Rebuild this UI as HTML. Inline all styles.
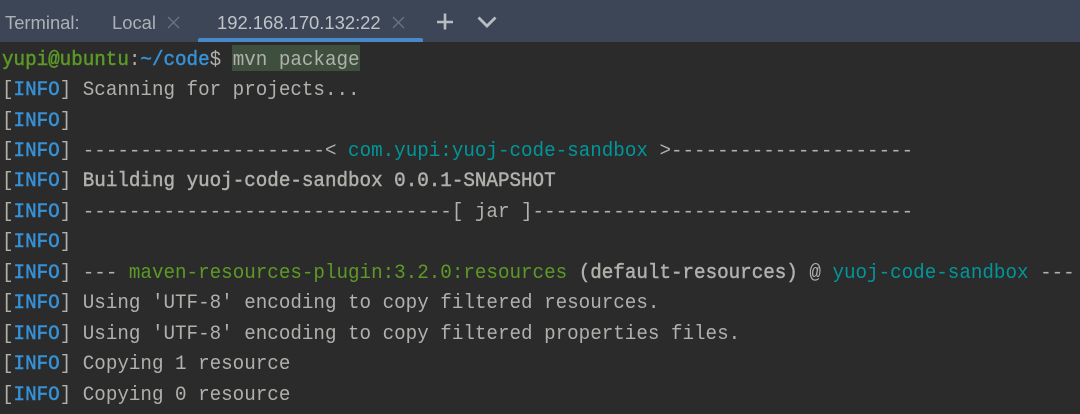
<!DOCTYPE html>
<html>
<head>
<meta charset="utf-8">
<style>
html,body{margin:0;padding:0;background:#2b2b2b}
#r{position:relative;width:1080px;height:414px;overflow:hidden;background:#2b2b2b}
#bar{position:absolute;left:0;top:0;width:1080px;height:42px;background:#3c4656}
.t{position:absolute;font-family:"Liberation Sans",sans-serif;font-size:18.4px;line-height:22px;white-space:pre;color:#b4b8bc}
#ul{position:absolute;left:198px;top:38px;width:225px;height:4px;background:#4a88c7;border-radius:2px 2px 0 0}
.l{position:absolute;left:2px;font-family:"Liberation Mono",monospace;font-size:19.23px;line-height:24px;height:24px;white-space:pre;color:#b0b0ac;transform:scaleY(1.07);transform-origin:50% 60%}
.b{color:#3592d8}.g{color:#5c9a26}.c{color:#00979a}
.w{-webkit-text-stroke:0.45px currentColor}
#hl{position:absolute;left:232px;top:45px;width:128px;height:26px;background:#3f4f3d}
svg{position:absolute;left:0;top:0}
</style>
</head>
<body>
<div id="r">
<div id="bar"></div>
<div class="t" style="left:5px;top:12px;color:#acb1b6">Terminal:</div>
<div class="t" style="left:112px;top:12px;color:#acb1b6">Local</div>
<div class="t" style="left:217px;top:12px;color:#c0c4c8">192.168.170.132:22</div>
<svg width="1080" height="42" viewBox="0 0 1080 42">
<path d="M168 17L179 28M179 17L168 28M393 17L404 28M404 17L393 28" stroke="#69727e" stroke-width="1.4" fill="none"/>
<path d="M437 22H453M445 13.500V29.500" stroke="#b9bdc1" stroke-width="2.600" fill="none"/>
<path d="M478.500 17.500L487 26L495.500 17.500" stroke="#b9bdc1" stroke-width="2.800" fill="none"/>
</svg>
<div id="ul"></div>
<div id="hl"></div>
<div class="l" style="top:47.500px"><span class="g w">yupi@ubuntu</span>:<span class="b w">~/code</span>$ mvn package</div>
<div class="l" style="top:78px"><span>[</span><span class="b w">INFO</span>] Scanning for projects...</div>
<div class="l" style="top:108.500px">[<span class="b w">INFO</span>]</div>
<div class="l" style="top:138.900px">[<span class="b w">INFO</span>] ---------------------&lt; <span class="c">com.yupi:yuoj-code-sandbox</span> &gt;---------------------</div>
<div class="l" style="top:169.400px">[<span class="b w">INFO</span>] <span class="w">Building yuoj-code-sandbox 0.0.1-SNAPSHOT</span></div>
<div class="l" style="top:199.800px">[<span class="b w">INFO</span>] --------------------------------[ jar ]---------------------------------</div>
<div class="l" style="top:230.300px">[<span class="b w">INFO</span>]</div>
<div class="l" style="top:260.700px">[<span class="b w">INFO</span>] --- <span class="g">maven-resources-plugin:3.2.0:resources</span> <span class="w">(default-resources)</span> @ <span class="c">yuoj-code-sandbox</span> ---</div>
<div class="l" style="top:291.200px">[<span class="b w">INFO</span>] Using 'UTF-8' encoding to copy filtered resources.</div>
<div class="l" style="top:321.600px">[<span class="b w">INFO</span>] Using 'UTF-8' encoding to copy filtered properties files.</div>
<div class="l" style="top:352.100px">[<span class="b w">INFO</span>] Copying 1 resource</div>
<div class="l" style="top:382.500px">[<span class="b w">INFO</span>] Copying 0 resource</div>
</div>
</body>
</html>
